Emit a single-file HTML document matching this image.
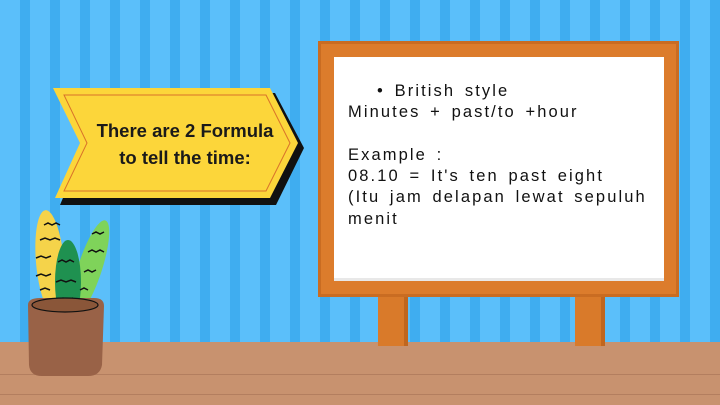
<!DOCTYPE html>
<html><head><style>
html,body{margin:0;padding:0}
body{width:720px;height:405px;position:relative;overflow:hidden;
background:repeating-linear-gradient(90deg,#5bbffa 0 20px,#3fadf0 20px 30px);}
.floor{position:absolute;left:0;top:342px;width:720px;height:63px;background:#c8926f;}
.floor i{position:absolute;left:0;width:720px;height:1px;background:#b37e5f}
.leg{position:absolute;top:290px;width:30px;height:56px;background:#d97a2a;border-right:4px solid #c0661e;box-sizing:border-box}
.frame{position:absolute;left:318px;top:41px;width:361px;height:256px;background:#dc7c2c;box-shadow:inset 0 0 0 3px #c96c22}
.board{position:absolute;left:334px;top:57px;width:330px;height:224px;background:#fff;box-shadow:inset 0 -3px 0 #e8e8e8}
.txt{position:absolute;left:348px;top:81px;font-family:"Liberation Sans",sans-serif;font-size:16.5px;line-height:21.3px;letter-spacing:2.1px;color:#111;white-space:pre;word-spacing:3px}
.btxt{position:absolute;left:72px;top:117px;width:226px;text-align:center;font-family:"Liberation Sans",sans-serif;font-weight:bold;font-size:18.5px;line-height:27px;color:#1a1a1a}
</style></head><body>
<div class="floor"><i style="top:32px"></i><i style="top:52px"></i></div>
<div class="leg" style="left:378px"></div>
<div class="leg" style="left:575px"></div>
<div class="frame"></div>
<div class="board"></div>
<div class="txt">   • British style
Minutes + past/to +hour

Example :
08.10 = It's ten past eight
(Itu jam delapan lewat sepuluh
menit</div>
<svg style="position:absolute;left:0;top:0" width="320" height="405">
<polygon points="58,93 275,93 304,148 276,205 60,205 84,148" fill="#111"/>
<polygon points="53,88 270,88 298,143 270,198 55,198 80,143" fill="#fcd63a"/>
<polygon points="64,95 266,95 290,143 266,191 64,191 87,143" fill="none" stroke="#d9722a" stroke-width="1"/>
<ellipse cx="50" cy="262" rx="14" ry="52" fill="#f5d34a" transform="rotate(-5 50 262)"/>
<ellipse cx="90" cy="268" rx="12" ry="50" fill="#7fd35a" transform="rotate(18 90 268)"/>
<ellipse cx="68" cy="282" rx="13" ry="42" fill="#1f9150"/>
<g stroke="#111" stroke-width="1.5" fill="none">
<path d="M44 225l4-2 4 2 4-2 4 2M40 240l5-2 5 2 5-2 5 2M36 258l5-2 5 2 5-2M36 276l5-2 5 2 5-2M40 290l5-2 5 2M58 262l4-2 4 2 4-2 4 2M56 282l5-2 5 2 5-2 5 2M58 300l5-2 5 2 5-2M92 234l4-2 4 2 4-2M88 252l4-2 4 2 4-2 4 2M84 272l4-2 4 2 4-2M80 290l4-2 4 2"/>
</g>
<path d="M28 305 Q28 298 40 298 L94 298 Q104 298 104 306 L102 365 Q100 376 88 376 L42 376 Q30 376 29 365Z" fill="#996247"/>
<ellipse cx="65" cy="305" rx="33" ry="7" fill="#8a5639" stroke="#111" stroke-width="1.2"/>
</svg>
<div class="btxt">There are 2 Formula<br>to tell the time:</div>
</body></html>
